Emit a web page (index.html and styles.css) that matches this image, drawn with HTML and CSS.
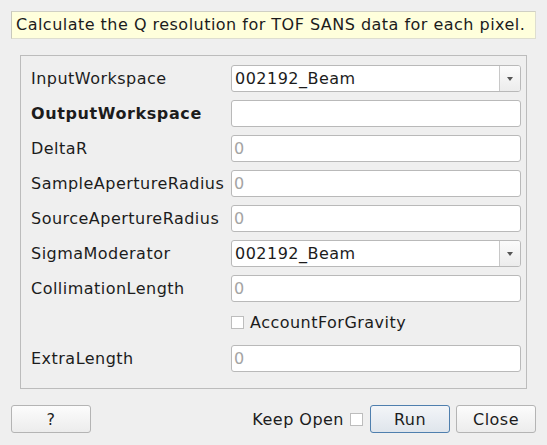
FILE: index.html
```html
<!DOCTYPE html>
<html>
<head>
<meta charset="utf-8">
<link rel="stylesheet" href="styles.css">
</head>
<body>
<div class="dialog">
  <div class="help-text">Calculate the Q resolution for TOF SANS data for each pixel.</div>
  <div class="group">
    <div class="form">
      <div class="label">InputWorkspace</div>
      <div class="combo"><span class="combo-text">002192_Beam</span><span class="combo-btn"><span class="arrow"></span></span></div>

      <div class="label bold">OutputWorkspace</div>
      <div class="field"></div>

      <div class="label">DeltaR</div>
      <div class="field"><span class="ph">0</span></div>

      <div class="label">SampleApertureRadius</div>
      <div class="field"><span class="ph">0</span></div>

      <div class="label">SourceApertureRadius</div>
      <div class="field"><span class="ph">0</span></div>

      <div class="label">SigmaModerator</div>
      <div class="combo"><span class="combo-text">002192_Beam</span><span class="combo-btn"><span class="arrow"></span></span></div>

      <div class="label">CollimationLength</div>
      <div class="field"><span class="ph">0</span></div>

      <div class="label"></div>
      <div class="check-row"><span class="checkbox"></span><span>AccountForGravity</span></div>

      <div class="label">ExtraLength</div>
      <div class="field"><span class="ph">0</span></div>
    </div>
  </div>
  <div class="footer">
    <button class="btn">?</button>
    <div class="spacer"></div>
    <span class="keep">Keep Open</span>
    <span class="checkbox keep-box"></span>
    <button class="btn default">Run</button>
    <button class="btn">Close</button>
  </div>
</div>
</body>
</html>
```
FILE: styles.css
```css
html, body {
  margin: 0;
  padding: 0;
  background: #efefef;
}
body {
  font-family: "DejaVu Sans", sans-serif;
  font-size: 16px;
  letter-spacing: 0.48px;
  color: #1c1c1c;
}
.dialog {
  width: 547px;
  height: 445px;
  box-sizing: border-box;
  padding: 11px 11px 0 11px;
  display: flex;
  flex-direction: column;
}
.help-text {
  height: 28px;
  box-sizing: border-box;
  background: #ffffdc;
  border: 1px solid #deded0;
  border-left-color: #c8c8bc;
  border-top-color: #d0d0c4;
  padding-left: 4px;
  line-height: 26px;
  white-space: nowrap;
}
.group {
  margin: 16px 9px 0 9px;
  height: 334px;
  box-sizing: border-box;
  border: 1px solid #bcbcbc;
  padding: 9px 4px 0 10px;
}
.form {
  display: grid;
  grid-template-columns: 200px 290px;
  grid-auto-rows: 27px;
  row-gap: 8px;
}
.form > .check-row { height: 25px; }
.label {
  display: flex;
  align-items: center;
  white-space: nowrap;
}
.bold { font-weight: bold; letter-spacing: 0.6px; }
.field {
  background: #fff;
  border: 1px solid #b9b9b9;
  border-radius: 3px;
  box-sizing: border-box;
  display: flex;
  align-items: center;
  padding-left: 2px;
}
.ph { color: #a4a4a4; }
.combo {
  background: #fff;
  border: 1px solid #b9b9b9;
  border-radius: 3px;
  box-sizing: border-box;
  display: flex;
  align-items: center;
}
.combo-text {
  flex: 1;
  padding-left: 3px;
}
.combo-btn {
  width: 20px;
  align-self: stretch;
  border-left: 1px solid #c8c8c8;
  background: linear-gradient(#fbfbfb, #ececec);
  border-radius: 0 2px 2px 0;
  display: flex;
  align-items: center;
  justify-content: center;
}
.arrow {
  width: 0;
  height: 0;
  border-left: 3.5px solid transparent;
  border-right: 3.5px solid transparent;
  border-top: 4px solid #555;
  margin-top: 1px;
}
.check-row {
  display: flex;
  align-items: center;
  gap: 6px;
}
.checkbox {
  width: 13px;
  height: 13px;
  box-sizing: border-box;
  background: #fff;
  border: 1px solid #bdbdbd;
  display: inline-block;
}
.footer {
  margin-top: 16px;
  height: 28px;
  display: flex;
  align-items: center;
}
.spacer { flex: 1; }
.btn {
  width: 80px;
  height: 28px;
  box-sizing: border-box;
  font-family: "DejaVu Sans", sans-serif;
  font-size: 16px;
  letter-spacing: 0.48px;
  color: #1c1c1c;
  border: 1px solid #b4b4b4;
  border-radius: 3px;
  background: linear-gradient(#fcfcfc, #ececec);
  padding: 0;
}
.btn.default {
  border-color: #4f7fae;
  background: linear-gradient(#f3f5f8, #dfe5ec);
  margin-right: 6px;
}
.keep { margin-right: 6px; }
.keep-box { margin-right: 7px; }
```
